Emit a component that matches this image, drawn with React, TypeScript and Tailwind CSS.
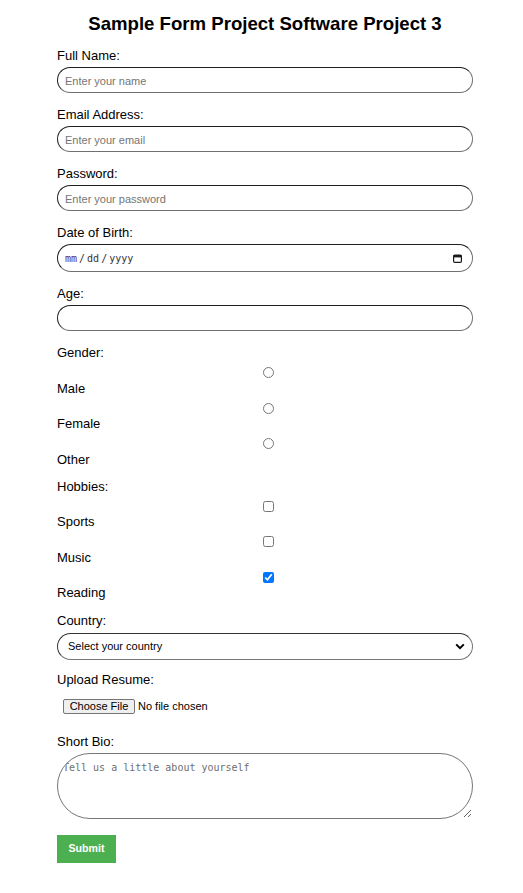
import React from "react";

const inputCls =
  "block w-full h-[26px] rounded-full border border-t-[#1f1f1f] border-l-[#1f1f1f] border-r-[#707070] border-b-[#707070] pl-[7px] pt-[2px] text-[11px] text-black placeholder:text-[#757575] outline-none bg-white";

function Label({ children, cls = "" }: { children: React.ReactNode; cls?: string }) {
  return <label className={`block text-[13px] leading-[15px] text-black ${cls}`}>{children}</label>;
}

function Option({ type, label, checked, lastCls }: { type: "radio" | "checkbox"; label: string; checked?: boolean; lastCls?: string }) {
  return (
    <>
      <div className="mt-[7px] mb-[2.5px] h-[11px] flex">
        <input
          type={type}
          name={type === "radio" ? "gender" : undefined}
          defaultChecked={checked}
          className="ml-[206px] w-[11px] h-[11px] accent-[#0075ff]"
        />
      </div>
      <Label cls={lastCls ?? ""}>{label}</Label>
    </>
  );
}

export default function App() {
  return (
    <div className="min-h-[893px] bg-white" style={{ fontFamily: '"Liberation Sans", Arial, sans-serif' }}>
      <form className="ml-[57px] w-[416px] pt-[13px]" onSubmit={(e) => e.preventDefault()}>
        <h2 className="text-center text-[18.6px] leading-[22px] font-bold text-black mb-[13px]">
          Sample Form Project Software Project 3
        </h2>

        <Label cls="mb-[4px]">Full Name:</Label>
        <input type="text" placeholder="Enter your name" className={inputCls} />
        <div className="h-[14px]" />

        <Label cls="mb-[4px]">Email Address:</Label>
        <input type="email" placeholder="Enter your email" className={inputCls} />
        <div className="h-[14px]" />

        <Label cls="mb-[4px]">Password:</Label>
        <input type="password" placeholder="Enter your password" className={inputCls} />
        <div className="h-[14px]" />

        <Label cls="mb-[4px]">Date of Birth:</Label>
        <div className="flex items-center h-[28px] rounded-full border border-t-[#1f1f1f] border-l-[#1f1f1f] border-r-[#707070] border-b-[#707070] pl-[7px] pr-[10px] pt-[1px]">
          <div className="flex items-center text-[10px] text-[#333]" style={{ fontFamily: '"DejaVu Sans Mono", monospace' }}>
            <span className="text-[#5a1d78]">mm</span>
            <span className="mx-[2px]">/</span>
            <span>dd</span>
            <span className="mx-[2px]">/</span>
            <span>yyyy</span>
          </div>
          <svg className="ml-auto" width="9" height="9" viewBox="0 0 9 9">
            <rect x="0.6" y="1" width="7.8" height="7.4" rx="1.2" fill="none" stroke="#1a1a1a" strokeWidth="1.2" />
            <rect x="0.6" y="1" width="7.8" height="2.4" fill="#1a1a1a" />
          </svg>
        </div>
        <div className="h-[14px]" />

        <Label cls="mb-[4px]">Age:</Label>
        <input type="number" className={inputCls} />
        <div className="h-[14px]" />

        <Label cls="mb-[1px]">Gender:</Label>
        <Option type="radio" label="Male" />
        <Option type="radio" label="Female" />
        <Option type="radio" label="Other" lastCls="mb-[12px]" />

        <Label cls="mb-[1px]">Hobbies:</Label>
        <Option type="checkbox" label="Sports" />
        <Option type="checkbox" label="Music" />
        <Option type="checkbox" label="Reading" checked lastCls="mb-[13px]" />

        <Label cls="mb-[5px]">Country:</Label>
        <div className="flex items-center h-[27px] rounded-full border border-t-[#333] border-l-[#333] border-r-[#777] border-b-[#777] pl-[10px] pr-[7px]">
          <span className="text-[11px] text-black">Select your country</span>
          <svg className="ml-auto" width="10" height="7" viewBox="0 0 10 7">
            <polyline points="1.2,1.4 5,5.2 8.8,1.4" fill="none" stroke="#000" strokeWidth="2" />
          </svg>
        </div>
        <div className="h-[12px]" />

        <Label cls="mb-[12px]">Upload Resume:</Label>
        <div className="flex items-center h-[14px] ml-[6px] text-[11px] text-black">
          <span className="flex items-center justify-center h-[15px] w-[72px] border border-[#767676] bg-[#efefef] rounded-[2px]">
            Choose File
          </span>
          <span className="ml-[3px]">No file chosen</span>
        </div>
        <div className="h-[21px]" />

        <Label cls="mb-[4px]">Short Bio:</Label>
        <textarea
          placeholder="Tell us a little about yourself"
          className="block w-full h-[66px] rounded-[33px] border border-[#767676] pl-[5px] pt-[6px] text-[10px] placeholder:text-[#6f6f6f] outline-none"
          style={{ fontFamily: '"DejaVu Sans Mono", monospace' }}
        />
        <div className="h-[16px]" />

        <button type="submit" className="block w-[59px] h-[28px] bg-[#4caf50] text-white text-[10.6px] font-bold">
          Submit
        </button>
      </form>
    </div>
  );
}
